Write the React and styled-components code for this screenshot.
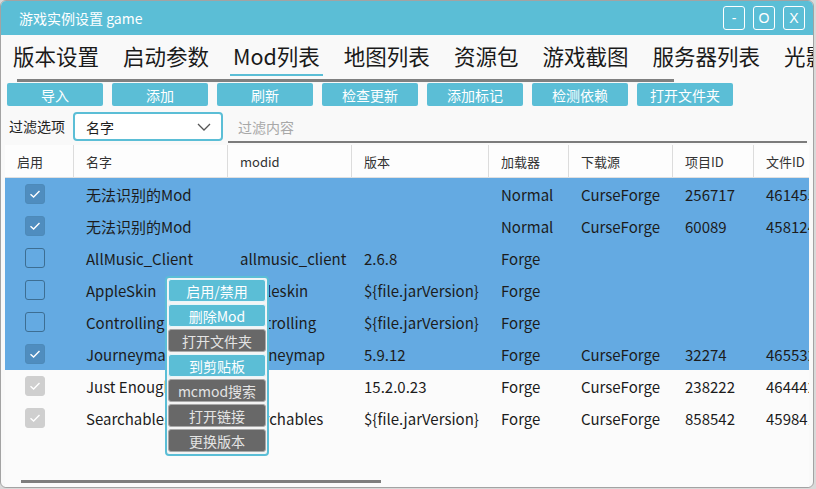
import React from "react"
import styled, { createGlobalStyle } from "styled-components"

const GlobalStyle = createGlobalStyle`
  html, body {
    margin: 0;
    padding: 0;
    background: #d9d9d9;
  }
  body {
    font-family: "Noto Sans CJK SC", "Noto Sans", sans-serif;
    color: #1e1e1e;
  }
`

const CYAN = "#5bbed6"

const Window = styled.div`
  width: 812px;
  height: 486px;
  border: 1px solid #a3a3a3;
  border-radius: 6px;
  background: #f9f9f9;
  overflow: hidden;
  display: flex;
  flex-direction: column;
  position: relative;
`

const TitleBar = styled.div`
  height: 34px;
  flex: none;
  background: ${CYAN};
  display: flex;
  align-items: center;
  padding: 0 8px 0 18px;
  color: #fff;
  font-size: 14px;
`

const Title = styled.div`
  flex: 1;
`

const WinButtons = styled.div`
  display: flex;
  gap: 8px;
`

const WinButton = styled.div`
  width: 20px;
  height: 22px;
  border: 1px solid #fff;
  border-radius: 3px;
  display: flex;
  align-items: center;
  justify-content: center;
  font-size: 14px;
  font-family: "Liberation Sans", sans-serif;
`

const TabArea = styled.div`
  height: 47px;
  flex: none;
  position: relative;
  overflow: hidden;
`

const TabStrip = styled.div`
  display: flex;
  gap: 24px;
  padding: 1px 0 0 12px;
  white-space: nowrap;
`

const Tab = styled.div`
  font-size: 21.5px;
  line-height: 40px;
  color: #1a1a1a;
  position: relative;
  &::after {
    content: "";
    display: ${(p) => (p.$active ? "block" : "none")};
    position: absolute;
    left: -3px;
    right: -3px;
    bottom: 0;
    height: 2px;
    background: ${CYAN};
  }
`

const TabScroll = styled.div`
  position: absolute;
  left: 16px;
  top: 44px;
  width: 657px;
  height: 3px;
  background: #808080;
`

const Toolbar = styled.div`
  display: flex;
  gap: 9px;
  padding: 1px 0 0 6px;
  height: 23px;
  flex: none;
`

const ToolButton = styled.div`
  width: 96px;
  height: 23px;
  background: ${CYAN};
  color: #fff;
  font-size: 14px;
  border-radius: 2px;
  display: flex;
  align-items: center;
  justify-content: center;
`

const FilterRow = styled.div`
  display: flex;
  align-items: flex-start;
  padding: 6px 4px 0 8px;
  height: 32px;
  flex: none;
`

const FilterLabel = styled.div`
  font-size: 14px;
  color: #222;
  width: 64px;
  line-height: 29px;
`

const Select = styled.div`
  width: 125px;
  height: 25px;
  border: 2px solid ${CYAN};
  border-radius: 4px;
  background: #fff;
  display: flex;
  align-items: center;
  justify-content: space-between;
  padding: 0 10px 0 11px;
  font-size: 14px;
  margin-right: 5px;
`

const FilterInput = styled.div`
  flex: 1;
  height: 29px;
  border-bottom: 2px solid #7c7c7c;
  display: flex;
  align-items: center;
  padding-left: 10px;
  font-size: 14px;
  color: #a8a8a8;
  margin-right: 2px;
`

const Table = styled.div`
  margin: 1px 4px 0 4px;
  flex: 1;
  display: flex;
  flex-direction: column;
  background: #fbfbfb;
  overflow: hidden;
  position: relative;
`

const cols = "68px 154px 124px 137px 80px 104px 81px 80px"

const HeaderRow = styled.div`
  display: grid;
  grid-template-columns: ${cols};
  height: 32px;
  background: #fdfdfd;
  border-bottom: 1px solid #e0e0e0;
  flex: none;
`

const HeaderCell = styled.div`
  font-size: 13px;
  color: #333;
  display: flex;
  align-items: center;
  padding-left: 12px;
  border-left: ${(p) => (p.$first ? "none" : "1px solid #dcdcdc")};
  white-space: nowrap;
`

const Row = styled.div`
  display: grid;
  grid-template-columns: ${cols};
  height: 32px;
  background: ${(p) => (p.$selected ? "#64aae2" : "transparent")};
  flex: none;
`

const Cell = styled.div`
  font-size: 15px;
  color: #1c1c1c;
  display: flex;
  align-items: center;
  padding-left: 13px;
  white-space: nowrap;
  overflow: hidden;
`

const CheckCell = styled.div`
  display: flex;
  align-items: center;
  padding-left: 20px;
`

const CheckBox = styled.div`
  width: 18px;
  height: 18px;
  border-radius: 3px;
  border: 1px solid
    ${(p) => (p.$disabled ? "#cfcfcf" : p.$checked ? "#4d8ab9" : "#3d6e93")};
  background: ${(p) =>
    p.$disabled ? "#cfcfcf" : p.$checked ? "#4f8dbf" : "transparent"};
  display: flex;
  align-items: center;
  justify-content: center;
`

const BottomScroll = styled.div`
  position: absolute;
  left: 16px;
  bottom: 4px;
  width: 360px;
  height: 3px;
  background: #7e7e7e;
`

const Menu = styled.div`
  position: absolute;
  left: 160px;
  top: 131px;
  width: 98px;
  padding: 1px 1px 2px;
  border: 2px solid ${CYAN};
  border-radius: 4px;
  background: #f4f4f4;
  display: flex;
  flex-direction: column;
  gap: 2px;
`

const MenuItem = styled.div`
  height: 21px;
  border: 1px solid ${(p) => (p.$active ? "#e8f6fa" : "#a9a9a9")};
  border-radius: 3px;
  background: ${(p) => (p.$active ? CYAN : "#686868")};
  color: ${(p) => (p.$active ? "#fff" : "#e4e4e4")};
  font-size: 14px;
  display: flex;
  align-items: center;
  justify-content: center;
`

function Check({ checked, disabled }) {
  return (
    <CheckBox $checked={checked} $disabled={disabled}>
      {(checked || disabled) && (
        <svg width="12" height="10" viewBox="0 0 12 10">
          <path
            d="M1.5 5.2 L4.6 8 L10.5 2"
            fill="none"
            stroke="#fff"
            strokeWidth="1.4"
          />
        </svg>
      )}
    </CheckBox>
  )
}

const tabs = ["版本设置", "启动参数", "Mod列表", "地图列表", "资源包", "游戏截图", "服务器列表", "光影包"]
const tools = ["导入", "添加", "刷新", "检查更新", "添加标记", "检测依赖", "打开文件夹"]
const headers = ["启用", "名字", "modid", "版本", "加载器", "下载源", "项目ID", "文件ID"]

const rows = [
  { sel: true, check: true, cells: ["无法识别的Mod", "", "", "Normal", "CurseForge", "256717", "4614553"] },
  { sel: true, check: true, cells: ["无法识别的Mod", "", "", "Normal", "CurseForge", "60089", "4581246"] },
  { sel: true, check: false, cells: ["AllMusic_Client", "allmusic_client", "2.6.8", "Forge", "", "", ""] },
  { sel: true, check: false, cells: ["AppleSkin", "appleskin", "${file.jarVersion}", "Forge", "", "", ""] },
  { sel: true, check: false, cells: ["Controlling", "controlling", "${file.jarVersion}", "Forge", "", "", ""] },
  { sel: true, check: true, cells: ["Journeymap", "journeymap", "5.9.12", "Forge", "CurseForge", "32274", "4655321"] },
  { sel: false, disabled: true, cells: ["Just Enough Items", "jei", "15.2.0.23", "Forge", "CurseForge", "238222", "4644421"] },
  { sel: false, disabled: true, cells: ["Searchables", "searchables", "${file.jarVersion}", "Forge", "CurseForge", "858542", "4598412"] },
]

const menu = [
  ["启用/禁用", true],
  ["删除Mod", true],
  ["打开文件夹", false],
  ["到剪贴板", true],
  ["mcmod搜索", false],
  ["打开链接", false],
  ["更换版本", false],
]

export default function App() {
  return (
    <>
      <GlobalStyle />
      <Window>
        <TitleBar>
          <Title>游戏实例设置 game</Title>
          <WinButtons>
            <WinButton>-</WinButton>
            <WinButton>O</WinButton>
            <WinButton>X</WinButton>
          </WinButtons>
        </TitleBar>
        <TabArea>
          <TabStrip>
            {tabs.map((t) => (
              <Tab key={t} $active={t === "Mod列表"}>
                {t}
              </Tab>
            ))}
          </TabStrip>
          <TabScroll />
        </TabArea>
        <Toolbar>
          {tools.map((t) => (
            <ToolButton key={t}>{t}</ToolButton>
          ))}
        </Toolbar>
        <FilterRow>
          <FilterLabel>过滤选项</FilterLabel>
          <Select>
            <span>名字</span>
            <svg width="14" height="8" viewBox="0 0 14 8">
              <path d="M1 1 L7 7 L13 1" fill="none" stroke="#555" strokeWidth="1.3" />
            </svg>
          </Select>
          <FilterInput>过滤内容</FilterInput>
        </FilterRow>
        <Table>
          <HeaderRow>
            {headers.map((h, i) => (
              <HeaderCell key={h} $first={i === 0}>
                {h}
              </HeaderCell>
            ))}
          </HeaderRow>
          {rows.map((r, i) => (
            <Row key={i} $selected={r.sel}>
              <CheckCell>
                <Check checked={r.check} disabled={r.disabled} />
              </CheckCell>
              {r.cells.map((c, j) => (
                <Cell key={j}>{c}</Cell>
              ))}
            </Row>
          ))}
          <BottomScroll />
          <Menu>
            {menu.map(([label, active]) => (
              <MenuItem key={label} $active={active}>
                {label}
              </MenuItem>
            ))}
          </Menu>
        </Table>
      </Window>
    </>
  )
}
